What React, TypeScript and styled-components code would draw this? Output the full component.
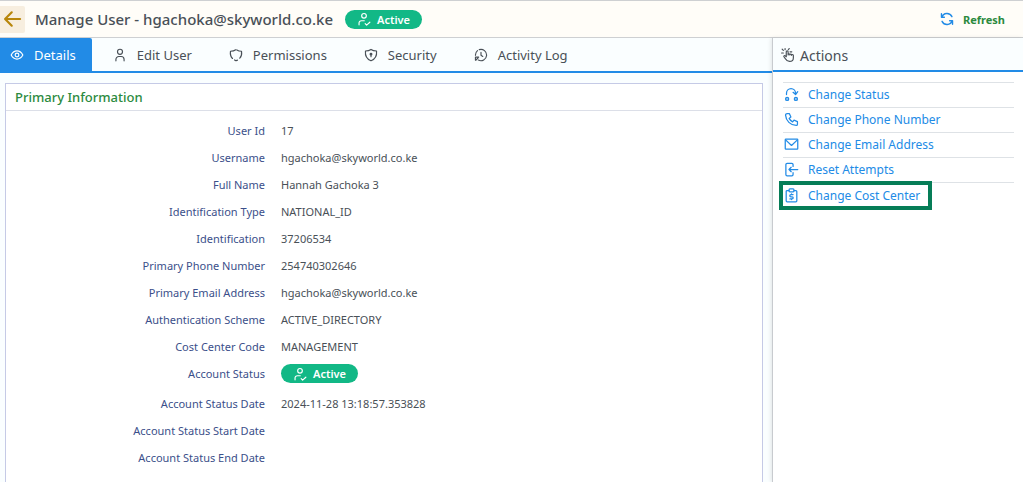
import React from "react";
import styled, { createGlobalStyle } from "styled-components";

const GlobalStyle = createGlobalStyle`
  * { box-sizing: border-box; }
  body {
    margin: 0;
    background: #fafeff;
    color: #495057;
    font-family: "Noto Sans", "Open Sans", sans-serif;
    font-size: 11px;
    line-height: 17px;
  }
  button { font: inherit; cursor: pointer; }
`;

const Page = styled.div`
  display: flex;
  flex-direction: column;
  min-height: 100vh;
`;

const Header = styled.header`
  display: flex;
  align-items: center;
  height: 38px;
  padding-right: 18px;
  background: #fffdf8;
  border-top: 1px solid #ced0d2;
  border-bottom: 1px solid #ced0d2;
`;

const BackButton = styled.button`
  display: flex;
  align-items: center;
  justify-content: center;
  width: 25px;
  height: 27px;
  padding: 0;
  border: 0;
  border-radius: 0 2px 2px 0;
  background: #f7eedf;
  color: #b8860b;
`;

const Title = styled.h1`
  margin: 0 12px 0 10px;
  font-size: 15px;
  line-height: 20px;
  font-weight: 500;
  color: #495057;
`;

const Badge = styled.span`
  display: inline-flex;
  align-items: center;
  gap: 6px;
  height: 19px;
  padding: 0 12px;
  border-radius: 10px;
  background: #12b886;
  color: #fff;
  font-weight: 600;
`;

const RefreshButton = styled.button`
  display: flex;
  align-items: center;
  gap: 9px;
  margin-left: auto;
  padding: 0;
  border: 0;
  background: none;
  color: #2b8a3e;
  font-weight: 700;

  svg { color: #228be6; }
`;

const Body = styled.div`
  display: flex;
  flex: 1;
`;

const Main = styled.main`
  flex: 1;
  min-width: 0;
  display: flex;
  flex-direction: column;
`;

const Tabs = styled.div`
  display: flex;
  gap: 5px;
  height: 35px;
  border-bottom: 2px solid #228be6;
`;

const Tab = styled.button<{ $active?: boolean }>`
  display: flex;
  align-items: center;
  gap: 10px;
  padding: 1px 16px 0;
  border: 0;
  border-radius: 0 2px 0 0;
  background: ${(p) => (p.$active ? "#228be6" : "transparent")};
  color: ${(p) => (p.$active ? "#fff" : "#495057")};
  font-size: 13px;
  white-space: nowrap;

  &:first-child { padding-left: 10px; }
`;

const Panel = styled.section`
  flex: 1;
  margin: 10px 9px 0 5px;
  border: 1px solid #c5cae6;
  border-bottom: 0;
  background: #fff;
`;

const PanelTitle = styled.h2`
  margin: 0;
  padding: 4px 9px;
  border-bottom: 1px solid #dcdfe8;
  color: #2b8a3e;
  font-size: 13px;
  line-height: 18px;
  font-weight: 500;
`;

const Details = styled.dl`
  margin: 0;
  padding-top: 6px;
`;

const DetailRow = styled.div<{ $spaced?: boolean }>`
  display: flex;
  align-items: center;
  gap: 16px;
  height: 27px;
  margin-bottom: ${(p) => (p.$spaced ? 3 : 0)}px;
`;

const Label = styled.dt`
  flex: 0 0 259px;
  text-align: right;
  color: #3b4f8a;
`;

const Value = styled.dd`
  display: flex;
  margin: 0;
  color: #495057;
`;

const Aside = styled.aside`
  flex: 0 0 251px;
  border-left: 1px solid #c8cbcf;
  background: #fff;
  box-shadow: -1px 0 4px rgba(0, 0, 0, 0.1);
`;

const AsideTitle = styled.h2`
  display: flex;
  align-items: center;
  gap: 5px;
  height: 34px;
  margin: 0;
  padding: 2px 8px 0;
  border-bottom: 2px solid #228be6;
  background: #fafeff;
  font-size: 14px;
  font-weight: 400;
`;

const ActionList = styled.ul`
  margin: 10px 9px 0 10px;
  padding: 0;
  list-style: none;
`;

const ActionItem = styled.li`
  height: 25px;
  border-top: 1px solid #dee2e6;
`;

const ActionButton = styled.button<{ $highlight?: boolean }>`
  display: flex;
  align-items: center;
  gap: 9px;
  height: 23px;
  padding: 0 0 0 1px;
  border: 0;
  background: none;
  color: #228be6;
  font-size: 12px;
  font-weight: 400;
  white-space: nowrap;

  ${(p) =>
    p.$highlight &&
    `
    height: 29px;
    margin: -2px 0 0 -4px;
    padding: 0 8px 1px 1px;
    border: 4px solid #067d57;
    background: #fff;
  `}
`;

type IconProps = { size?: number; width?: number; children: React.ReactNode };

const Icon = ({ size = 14, width = 2, children }: IconProps) => (
  <svg
    width={size}
    height={size}
    viewBox="0 0 24 24"
    fill="none"
    stroke="currentColor"
    strokeWidth={width}
    strokeLinecap="round"
    strokeLinejoin="round"
    aria-hidden="true"
  >
    {children}
  </svg>
);

const ArrowLeft = () => (
  <Icon size={20} width={2.6}>
    <path d="M20.500 12H3M10.500 4l-8 8 8 8" />
  </Icon>
);
const UserCheck = () => (
  <Icon>
    <circle cx="12" cy="6.500" r="4" />
    <path d="M3.500 22v-3a4 4 0 0 1 4-4h5M14 20l2.500 2.500 5.500-5" />
  </Icon>
);
const Eye = () => (
  <Icon>
    <path d="M2 12c2.500-4.700 6-7 10-7s7.500 2.300 10 7c-2.500 4.700-6 7-10 7s-7.500-2.300-10-7z" />
    <circle cx="12" cy="12" r="3.200" />
  </Icon>
);
const User = () => (
  <Icon>
    <circle cx="12" cy="6.500" r="4.300" />
    <path d="M5 22v-2.500a5 5 0 0 1 5-5h4a5 5 0 0 1 5 5V22" />
  </Icon>
);
const ShieldOpen = () => (
  <Icon>
    <path d="M11.500 3C9 5 6.500 5.500 2.500 5.500c-.6 4.500.2 9 3.500 12.500M9.500 20.500 12 22l2.500-1.200M18.500 17.500c2.800-3 3.600-7.500 3-12-3.500 0-6-.8-8-2.200" />
  </Icon>
);
const ShieldLock = () => (
  <Icon>
    <path d="M12 2.500C9 4.500 6 5 2.500 5.200c-.8 7.800 2 13.800 9.500 16.800 7.500-3 10.300-9 9.500-16.800C18 5 15 4.500 12 2.500z" />
    <circle cx="12" cy="10.500" r="1.500" fill="currentColor" />
    <path d="M12 11v4" />
  </Icon>
);
const History = () => (
  <Icon>
    <path d="M2.500 12.500A9.700 9.700 0 0 1 6 4.500M9 2.800a9.700 9.700 0 1 1-1.500 17.900M2.500 15.500V21M2.500 15.500H8M3 21l4-4M12 7.500v5l3 2" />
  </Icon>
);
const Sync = () => (
  <Icon width={2.4}>
    <path d="M2.500 3v6h5M3 9a9.500 9.500 0 0 1 17.500-1M21.500 21v-6h-5M21 15a9.500 9.500 0 0 1-17.500 1" />
  </Icon>
);
const HandTap = () => (
  <Icon>
    <path d="M9 15V6.500a1.600 1.600 0 0 1 3.200 0V12c0-2.600 3-2.600 3 0 0-2 3-2 3 .5 0-2 3-1.800 3 .5v3.500c0 4-2.500 6.500-6.500 6.500-3.700 0-5.500-1.500-6.700-4L5 15c-.6-1.500 1.300-2.500 2.300-1.500L9 15M2 2l2 2M1 8.500h3M7 1v2M12.500 3l1.500-2M15.500 6.500h3" />
  </Icon>
);
const StatusChange = () => (
  <Icon size={15}>
    <circle cx="5" cy="19" r="2.500" fill="currentColor" fillOpacity=".4" />
    <circle cx="19" cy="19" r="2.500" fill="currentColor" fillOpacity=".4" />
    <path d="M4 12v-2a7 7 0 0 1 14.500 0v1M14.500 8.500l4 3.500 3.500-4.500" />
  </Icon>
);
const Phone = () => (
  <Icon size={15}>
    <path d="M5 2.500h3.500l2.500 5.500-2.800 2.200a13 13 0 0 0 5.600 5.600L16 13l5.500 2.500v4a2 2 0 0 1-2 2A17.500 17.500 0 0 1 2.500 5 2.500 2.500 0 0 1 5 2.500z" />
  </Icon>
);
const Mail = () => (
  <Icon size={15}>
    <rect x="2" y="3.500" width="20" height="16" rx="1" />
    <path d="m3 5 9 8.500L21 5" />
  </Icon>
);
const ExitLeft = () => (
  <Icon size={15}>
    <path d="M14.500 7V4a2 2 0 0 0-2-2H5a2 2 0 0 0-2 2v16a2 2 0 0 0 2 2h7.500a2 2 0 0 0 2-2v-3M22 12H8M11.500 8.500 8 12l3.500 3.500" />
  </Icon>
);
const ClipboardDollar = () => (
  <Icon size={15}>
    <path d="M8 4H5a1.500 1.500 0 0 0-1.500 1.500v15A1.500 1.500 0 0 0 5 22h14a1.500 1.500 0 0 0 1.500-1.500v-15A1.500 1.500 0 0 0 19 4h-3" />
    <rect x="8" y="1.500" width="8" height="4.500" rx="1.500" />
    <path d="M14.500 10.500h-3.500a1.700 1.700 0 0 0 0 3.500h2a1.700 1.700 0 0 1 0 3.500H9.500M12 9.500v1M12 17.500v1" />
  </Icon>
);

const ActiveBadge = () => (
  <Badge>
    <UserCheck />
    Active
  </Badge>
);

const tabs = [
  { name: "Details", icon: <Eye /> },
  { name: "Edit User", icon: <User /> },
  { name: "Permissions", icon: <ShieldOpen /> },
  { name: "Security", icon: <ShieldLock /> },
  { name: "Activity Log", icon: <History /> },
];

const details: { label: string; value: React.ReactNode; spaced?: boolean }[] = [
  { label: "User Id", value: "17" },
  { label: "Username", value: "hgachoka@skyworld.co.ke" },
  { label: "Full Name", value: "Hannah Gachoka 3" },
  { label: "Identification Type", value: "NATIONAL_ID" },
  { label: "Identification", value: "37206534" },
  { label: "Primary Phone Number", value: "254740302646" },
  { label: "Primary Email Address", value: "hgachoka@skyworld.co.ke" },
  { label: "Authentication Scheme", value: "ACTIVE_DIRECTORY" },
  { label: "Cost Center Code", value: "MANAGEMENT" },
  { label: "Account Status", value: <ActiveBadge />, spaced: true },
  { label: "Account Status Date", value: "2024-11-28 13:18:57.353828" },
  { label: "Account Status Start Date", value: "" },
  { label: "Account Status End Date", value: "" },
];

const actions = [
  { name: "Change Status", icon: <StatusChange /> },
  { name: "Change Phone Number", icon: <Phone /> },
  { name: "Change Email Address", icon: <Mail /> },
  { name: "Reset Attempts", icon: <ExitLeft /> },
  { name: "Change Cost Center", icon: <ClipboardDollar />, highlight: true },
];

export default function App() {
  return (
    <Page>
      <GlobalStyle />
      <Header>
        <BackButton aria-label="Back">
          <ArrowLeft />
        </BackButton>
        <Title>Manage User - hgachoka@skyworld.co.ke</Title>
        <ActiveBadge />
        <RefreshButton>
          <Sync />
          Refresh
        </RefreshButton>
      </Header>
      <Body>
        <Main>
          <Tabs role="tablist">
            {tabs.map((tab, i) => (
              <Tab key={tab.name} role="tab" aria-selected={i === 0} $active={i === 0}>
                {tab.icon}
                {tab.name}
              </Tab>
            ))}
          </Tabs>
          <Panel>
            <PanelTitle>Primary Information</PanelTitle>
            <Details>
              {details.map((row) => (
                <DetailRow key={row.label} $spaced={row.spaced}>
                  <Label>{row.label}</Label>
                  <Value>{row.value}</Value>
                </DetailRow>
              ))}
            </Details>
          </Panel>
        </Main>
        <Aside>
          <AsideTitle>
            <HandTap />
            Actions
          </AsideTitle>
          <ActionList>
            {actions.map((action) => (
              <ActionItem key={action.name}>
                <ActionButton $highlight={action.highlight}>
                  {action.icon}
                  {action.name}
                </ActionButton>
              </ActionItem>
            ))}
          </ActionList>
        </Aside>
      </Body>
    </Page>
  );
}
